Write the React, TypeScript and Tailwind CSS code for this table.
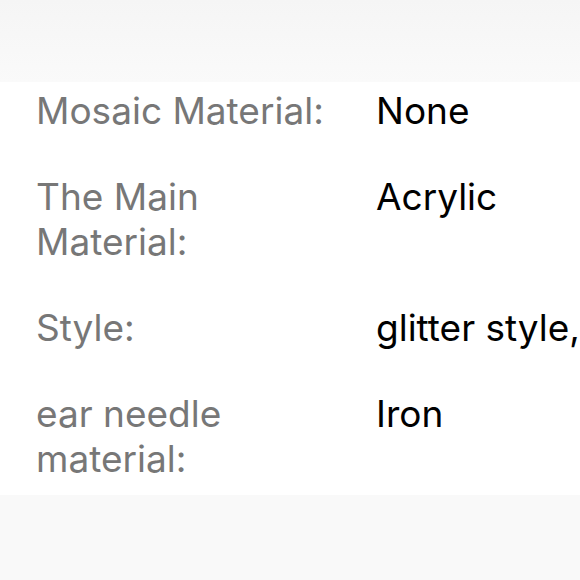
const rows = [
  { label: 'Mosaic Material:', value: 'None' },
  { label: 'The Main Material:', value: 'Acrylic' },
  { label: 'Style:', value: 'glitter style,' },
  { label: 'ear needle material:', value: 'Iron' },
];

export default function App() {
  return (
    <div className="w-[580px] h-[580px] overflow-hidden bg-[#f8f8f8] flex flex-col" style={{ fontFamily: 'Inter, "Liberation Sans", sans-serif' }}>
      <div className="h-[82px] bg-gradient-to-b from-[#f5f5f5] to-[#fafafa]" />
      <div className="bg-white pt-[6px] pb-[14px] flex flex-col gap-[41px]">
        {rows.map(r => (
          <div key={r.label} className="flex pl-[36px] text-[37px] leading-[45px]">
            <div className="w-[310px] shrink-0 text-[#777777]">{r.label}</div>
            <div className="ml-[30px] whitespace-nowrap text-black">{r.value}</div>
          </div>
        ))}
      </div>
      <div className="flex-1 bg-[#f9f9f9]" />
    </div>
  );
}
